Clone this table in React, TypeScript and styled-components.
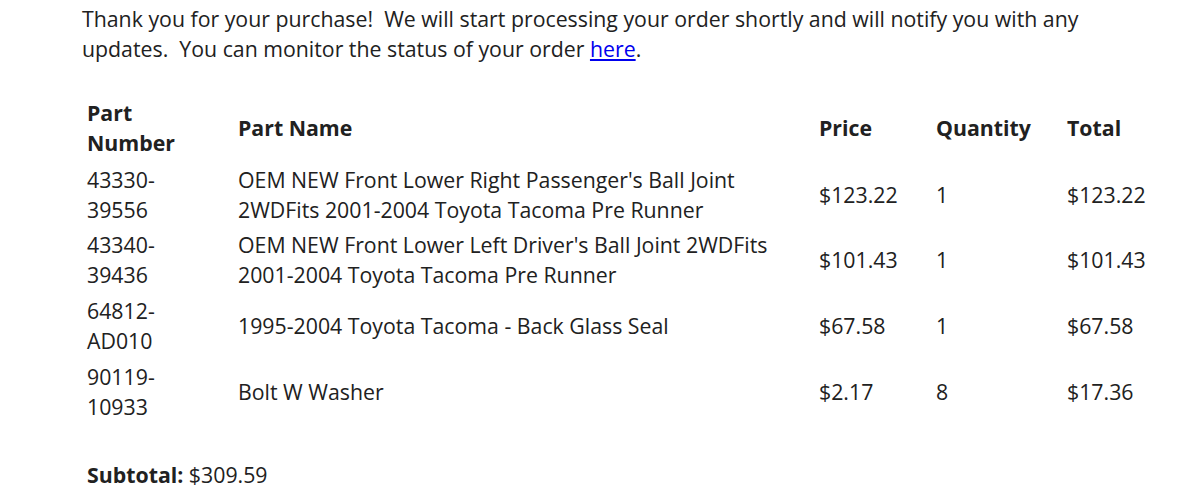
import styled, { createGlobalStyle } from "styled-components";

interface Part {
  number: string;
  name: string;
  price: string;
  quantity: number;
  total: string;
}

const parts: Part[] = [
  {
    number: "43330-39556",
    name: "OEM NEW Front Lower Right Passenger's Ball Joint 2WDFits 2001-2004 Toyota Tacoma Pre Runner",
    price: "$123.22",
    quantity: 1,
    total: "$123.22",
  },
  {
    number: "43340-39436",
    name: "OEM NEW Front Lower Left Driver's Ball Joint 2WDFits 2001-2004 Toyota Tacoma Pre Runner",
    price: "$101.43",
    quantity: 1,
    total: "$101.43",
  },
  {
    number: "64812-AD010",
    name: "1995-2004 Toyota Tacoma - Back Glass Seal",
    price: "$67.58",
    quantity: 1,
    total: "$67.58",
  },
  {
    number: "90119-10933",
    name: "Bolt W Washer",
    price: "$2.17",
    quantity: 8,
    total: "$17.36",
  },
];

// width of each column and the room kept free on its right
const columns = [
  { label: "Part Number", width: 151, gap: 45 },
  { label: "Part Name", width: 581, gap: 22 },
  { label: "Price", width: 117, gap: 5 },
  { label: "Quantity", width: 131, gap: 5 },
  { label: "Total", width: 104, gap: 5 },
];

const App: React.FC = () => {
  return (
    <>
      <GlobalStyle />
      <Page>
        <Intro>
          Thank you for your purchase!{"\u00a0 "}We will start processing your order shortly and will notify you
          with any updates.{"\u00a0 "}You can monitor the status of your order <a href="#">here</a>.
        </Intro>

        <PartsTable>
          <colgroup>
            {columns.map((c) => (
              <col key={c.label} style={{ width: c.width }} />
            ))}
          </colgroup>
          <thead>
            <tr>
              {columns.map((c) => (
                <HeadCell key={c.label} $gap={c.gap}>
                  {c.label}
                </HeadCell>
              ))}
            </tr>
          </thead>
          <tbody>
            {parts.map((p) => (
              <tr key={p.number}>
                <Cell $gap={columns[0].gap}>{p.number}</Cell>
                <Cell $gap={columns[1].gap}>{p.name}</Cell>
                <Cell $gap={columns[2].gap}>{p.price}</Cell>
                <Cell $gap={columns[3].gap}>{p.quantity}</Cell>
                <Cell $gap={columns[4].gap}>{p.total}</Cell>
              </tr>
            ))}
          </tbody>
        </PartsTable>

        <Subtotal>
          <strong>Subtotal:</strong> $309.59
        </Subtotal>
      </Page>
    </>
  );
};

const GlobalStyle = createGlobalStyle`
  body {
    margin: 0;
    background: #ffffff;
    color: #212121;
    font-family: "Open Sans", "Noto Sans", sans-serif;
    font-size: 21.3px;
    line-height: 30px;
  }
`;

const Page = styled.div`
  padding: 4px 30px 0 82px;
`;

const Intro = styled.p`
  margin: 0;
  max-width: 1030px;

  a {
    color: #0000ee;
  }
`;

const PartsTable = styled.table`
  margin-top: 30px;
  border-collapse: collapse;
  table-layout: fixed;
  width: 1084px;
`;

const HeadCell = styled.th<{ $gap: number }>`
  padding: 4px ${({ $gap }) => $gap}px 4px 5px;
  text-align: left;
  vertical-align: middle;
  font-weight: 700;
`;

const Cell = styled.td<{ $gap: number }>`
  padding: 2.8px ${({ $gap }) => $gap}px 2.8px 5px;
  vertical-align: middle;
`;

const Subtotal = styled.p`
  margin: 36px 0 0 5px;
`;

export default App;
